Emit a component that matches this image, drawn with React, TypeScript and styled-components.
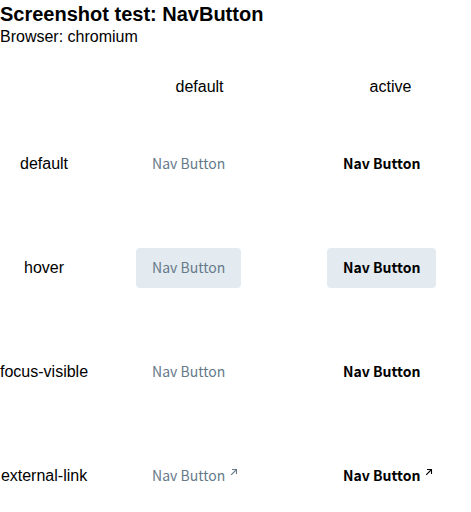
import React from 'react';
import styled, { createGlobalStyle } from 'styled-components';

const GlobalStyle = createGlobalStyle`
  *, *::before, *::after { box-sizing: border-box; }
  body {
    margin: 0;
    background: #fff;
    color: #000;
    font: 16px/18px "Liberation Sans", Arial, sans-serif;
  }
`;

const Header = styled.header`
  padding-top: 2px;
  margin-bottom: 30px;
`;

const Title = styled.h1`
  margin: 0;
  font-size: 20px;
  line-height: 24px;
`;

const Browser = styled.p`
  margin: 0;
  line-height: 22px;
`;

const Grid = styled.div`
  display: grid;
  grid-template-columns: auto 1fr 1fr;
  gap: 32px;
  padding-right: 1px;
`;

const Label = styled.div`
  display: flex;
  align-items: center;
  justify-content: center;
  white-space: nowrap;
`;

const Cell = styled.div`
  display: flex;
  padding: 16px;
`;

const NavButton = styled.button<{ $active: boolean; $hover: boolean }>`
  display: inline-flex;
  align-items: center;
  gap: 5px;
  height: 40px;
  padding: 0 16px 2px;
  border: 0;
  border-radius: 4px;
  background: ${({ $hover }) => ($hover ? '#e3eaf0' : 'transparent')};
  color: ${({ $active }) => ($active ? '#000' : '#667a8a')};
  font-family: "Noto Sans CJK SC", sans-serif;
  font-size: 14px;
  font-weight: ${({ $active }) => ($active ? 700 : 400)};
  line-height: 24px;
  white-space: nowrap;
  cursor: pointer;

  &:hover { background: #e3eaf0; }
`;

const Arrow = styled.svg`
  flex: none;
  align-self: flex-start;
  margin-top: 12px;
`;

const ExternalIcon = () => (
  <Arrow width="8" height="8" viewBox="0 0 8 8" fill="none" stroke="currentColor" aria-hidden="true">
    <path d="M2 1.5H6.5V6M6.5 1.5L1.2 6.8" strokeWidth="1.1" />
  </Arrow>
);

const states = ['default', 'hover', 'focus-visible', 'external-link'];
const variants = ['default', 'active'];

export default function App() {
  return (
    <main>
      <GlobalStyle />
      <Header>
        <Title>Screenshot test: NavButton</Title>
        <Browser>Browser: chromium</Browser>
      </Header>
      <Grid>
        <Label />
        {variants.map((variant) => (
          <Label key={variant}>{variant}</Label>
        ))}
        {states.map((state) => (
          <React.Fragment key={state}>
            <Label>{state}</Label>
            {variants.map((variant) => (
              <Cell key={variant}>
                <NavButton type="button" $active={variant === 'active'} $hover={state === 'hover'}>
                  Nav Button
                  {state === 'external-link' && <ExternalIcon />}
                </NavButton>
              </Cell>
            ))}
          </React.Fragment>
        ))}
      </Grid>
    </main>
  );
}
